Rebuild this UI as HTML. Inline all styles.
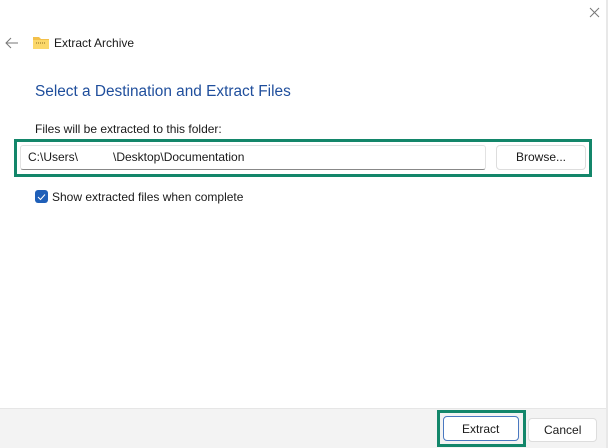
<!DOCTYPE html>
<html><head><style>
body{margin:0;width:608px;height:448px;background:#fff;font-family:"Liberation Sans",sans-serif;position:relative;overflow:hidden;color:#1a1a1a}
div,span{position:absolute;box-sizing:border-box}
.t{font-size:12px;white-space:nowrap}
</style></head><body>
<div style="right:0;top:0;width:2px;height:448px;background:#e8e8e8"></div>
<svg style="position:absolute;left:589px;top:7px" width="11" height="11"><path d="M1 1L10 10M10 1L1 10" stroke="#777" stroke-width="1"/></svg>
<svg style="position:absolute;left:5px;top:37px" width="14" height="12"><path d="M13 6H1M6 1L1 6L6 11" stroke="#777" stroke-width="1" fill="none"/></svg>
<svg style="position:absolute;left:33px;top:35px" width="16" height="14"><path d="M0 2h6l2 2h8v10H0z" fill="#f3c04a"/><rect x="0" y="5" width="16" height="9" fill="#fbd86a"/><path d="M3 8h10" stroke="#8a6a20" stroke-dasharray="1 1"/></svg>
<span class="t" style="left:54px;top:36px;font-size:12px">Extract Archive</span>
<span style="left:35px;top:83px;font-size:15.4px;color:#1f4e9c;white-space:nowrap">Select a Destination and Extract Files</span>
<span class="t" style="left:35px;top:122px">Files will be extracted to this folder:</span>
<div style="left:14px;top:139px;width:578px;height:38px;border:3px solid #13866a"></div>
<div style="left:20px;top:145px;width:466px;height:25px;border:1px solid #e2e2e2;border-bottom:1px solid #888;border-radius:3px"></div>
<span class="t" style="left:28px;top:150px">C:\Users\</span>
<span class="t" style="left:113px;top:150px">\Desktop\Documentation</span>
<div style="left:496px;top:145px;width:90px;height:25px;border:1px solid #ddd;border-radius:4px"></div>
<span class="t" style="left:516px;top:150px">Browse...</span>
<div style="left:35px;top:190px;width:13px;height:13px;background:#1f5fb8;border-radius:3px"></div>
<svg style="position:absolute;left:37px;top:193px" width="9" height="8"><path d="M1 4L3.5 6.5L8 1.5" stroke="#fff" fill="none"/></svg>
<span class="t" style="left:52px;top:190px">Show extracted files when complete</span>
<div style="left:0;top:408px;width:606px;height:40px;background:#f3f3f3;border-top:1px solid #e6e6e6"></div>
<div style="left:437px;top:410px;width:89px;height:37px;border:3px solid #13866a"></div>
<div style="left:443px;top:416px;width:76px;height:25px;background:#fff;border:1px solid #4a78c0;border-radius:4px"></div>
<span class="t" style="left:462px;top:422px">Extract</span>
<div style="left:528px;top:418px;width:69px;height:24px;background:#fff;border:1px solid #ddd;border-radius:4px"></div>
<span class="t" style="left:544px;top:423px">Cancel</span>
</body></html>
